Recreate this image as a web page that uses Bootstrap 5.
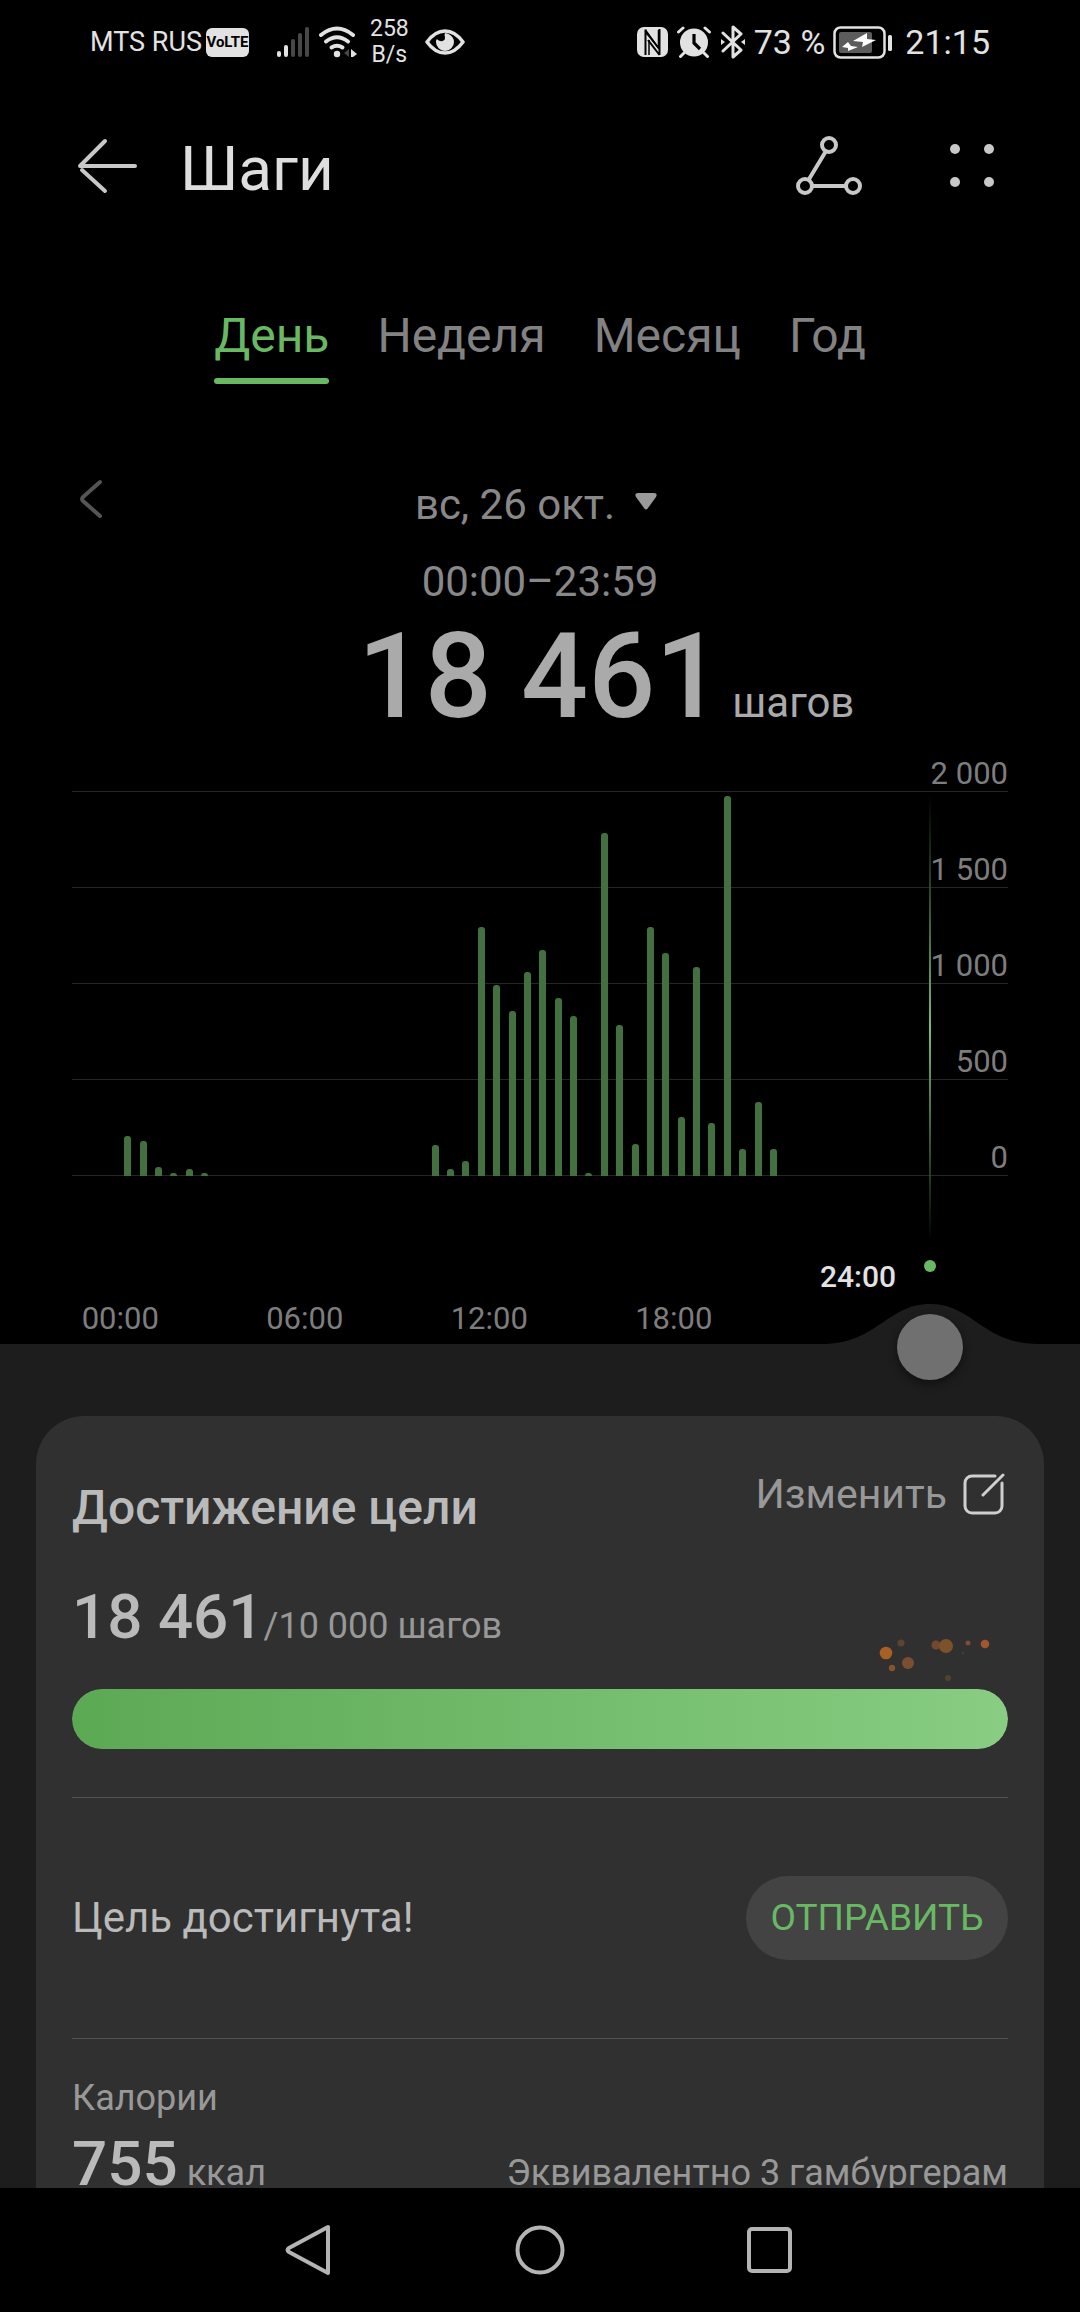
<!DOCTYPE html>
<html lang="ru" data-bs-theme="dark">
<head>
<meta charset="utf-8">
<meta name="viewport" content="width=device-width, initial-scale=1">
<title>Шаги</title>
<link href="https://cdn.jsdelivr.net/npm/bootstrap@5.3.0/dist/css/bootstrap.min.css" rel="stylesheet">
<style>
  :root { --accent: #69b964; --bar: #42703e; --sheet: #1d1d1d; --panel: #303030; }
  body { background: #000; color: #888; font-family: Roboto, "Noto Sans", sans-serif; font-size: 42px; line-height: 56px; }
  svg { display: block; flex: none; }
  .btn-plain { background: none; border: 0; padding: 0; color: inherit; }

  .status-bar { height: 84px; padding: 0 90px; color: #e2e2e2; font-size: 34px; line-height: 40px; }
  .carrier { font-size: 27px; }
  .volte { background: #e2e2e2; color: #000; border-radius: 6px; width: 43px; height: 29px; font-size: 15px; line-height: 29px; font-weight: 700; text-align: center; }
  .net-speed { font-size: 23px; line-height: 26px; text-align: center; margin-left: 13px; }

  .app-header { height: 164px; padding: 0 84px 0 76px; color: #c8c8c8; }
  .app-header h1 { font-size: 62px; line-height: 62px; font-weight: 400; color: #dedede; padding: 6px 0 0 42px; }
  .header-menu { margin-left: 86px; }

  .period-tabs { gap: 48px; margin-top: 60px; font-size: 48px; color: #828282; }
  .period-tabs .nav-link { padding: 0 0 20px; color: inherit; position: relative; }
  .period-tabs .nav-link.active { color: var(--accent); }
  .period-tabs .nav-link.active::after { content: ""; position: absolute; left: 0; right: 0; bottom: 0; height: 6px; border-radius: 3px; background: var(--accent); }

  .date-row { margin-top: 93px; padding: 0 78px; }
  .date-pick { gap: 20px; padding-right: 8px; }
  .time-range { margin-top: 21px; }
  .total { display: grid; grid-template-columns: 1fr auto 1fr; margin-top: 9px; color: #aaa; align-items: baseline; }
  .total-value { grid-column: 2; font-size: 118px; line-height: 116px; font-weight: 500; }
  .total-unit { padding-left: 10px; }

  .chart { margin: 17px 72px 0; font-size: 31px; line-height: 34px; color: #7d7d7d; position: relative; }
  .scale-row { height: 96px; border-bottom: 1px solid #262626; }
  .scale-row.top { height: 40px; }
  .bars { position: absolute; top: 40px; bottom: 0; left: 48px; right: 150px; }
  .bars div { width: 7px; background: var(--bar); border-radius: 3px 3px 0 0; }
  .slot { flex: 1 1 0; }
  .marker-line { position: absolute; top: 43px; height: 447px; right: 77px; width: 2px; background: linear-gradient(transparent, #2c4a2a 22%, #79bd74 52%, #3c6439 75%, transparent); }
  .marker-row { padding: 83px 144px 6px 0; gap: 28px; font-size: 30px; line-height: 36px; font-weight: 500; color: #e2e2e2; }
  .marker-dot { width: 12px; height: 12px; border-radius: 50%; background: var(--accent); margin-top: 1px; }
  .time-axis { padding: 0 314px 7px 28px; font-size: 31px; line-height: 36px; color: #7d7d7d; }

  .sheet { background: var(--sheet); position: relative; min-height: 0; }
  .sheet-bump { position: absolute; right: 42px; top: -40px; }
  .time-slider { position: absolute; top: -30px; left: 87px; right: 117px; width: auto; height: 66px; appearance: none; background: none; z-index: 2; padding: 0; margin: 0; }
  .time-slider::-webkit-slider-runnable-track { background: none; height: 66px; }
  .time-slider::-webkit-slider-thumb { appearance: none; width: 66px; height: 66px; margin: 0; border-radius: 50%; background: #707070; box-shadow: 0 4px 10px rgba(0,0,0,.45); }
  .sheet-clip { overflow: hidden; height: 100%; padding: 72px 36px 0; }

  .goal-card { background: var(--panel); border-radius: 48px 48px 0 0; padding: 56px 36px 36px; }
  .goal-card h2 { font-size: 48px; line-height: 56px; font-weight: 500; color: #bababa; padding-top: 8px; }
  .edit-link { color: #989898; font-size: 41px; line-height: 44px; gap: 16px; padding-right: 3px; }
  .figure-line { line-height: 72px; font-size: 36px; color: #989898; }
  .figure-line strong { font-size: 62px; font-weight: 500; color: #bababa; }
  .goal-figures { margin-top: 45px; }
  .goal-meter { margin-top: 27px; }
  .goal-progress { height: 60px; border-radius: 30px; background: #444; }
  .goal-progress .progress-bar { background: linear-gradient(90deg, #5ca954, #72bb6c 50%, #88cd82); border-radius: 30px; }
  .sparks { position: absolute; right: 14px; top: -53px; }
  .rule { border-top: 1px solid #535353; }
  .reached { height: 240px; color: #bababa; }
  .btn-send { background: #434343; color: var(--accent); border-radius: 42px; height: 84px; width: 262px; font-size: 37px; line-height: 84px; padding: 0; border: 0; }
  .calories-label { font-size: 36px; line-height: 44px; color: #989898; margin-top: 37px; }

  .system-nav { height: 124px; gap: 174px; color: #b4b4b4; }
  .system-nav .btn-plain { width: 56px; }
</style>
</head>
<body>
<div class="vh-100 d-flex flex-column">

  <div class="status-bar d-flex align-items-center justify-content-between flex-shrink-0">
    <div class="d-flex align-items-center">
      <span class="carrier">MTS RUS</span>
      <span class="volte ms-1">VoLTE</span>
      <svg class="ms-4" width="38" height="32" viewBox="0 0 38 32" aria-hidden="true">
        <g fill="#e2e2e2"><rect x="4" y="25" width="4" height="6" rx="2"/><rect x="11" y="19" width="4" height="12" rx="2"/></g>
        <g fill="#484848"><rect x="18" y="13" width="4" height="18" rx="2"/><rect x="25" y="7" width="4" height="24" rx="2"/><rect x="32" y="1" width="4" height="30" rx="2"/></g>
      </svg>
      <svg class="ms-2" width="38" height="32" viewBox="0 0 38 32" aria-hidden="true">
        <g fill="none" stroke="#e2e2e2" stroke-width="4" stroke-linecap="round"><path d="M2 9Q18-4 34 9"/><path d="M7 15.500Q18 7 29 15.500"/><path d="M12.500 21.500Q18 18 23.500 21.500"/></g>
        <circle cx="18" cy="28" r="3.200" fill="#e2e2e2"/><path d="M30 23v8l-5-4z" fill="#484848"/><path d="M32 23l6 5-4 3h-2z" fill="#e2e2e2"/>
      </svg>
      <span class="net-speed">258<br>B/s</span>
      <svg class="ms-3" width="40" height="28" viewBox="0 0 40 28" aria-hidden="true">
        <path d="M2 14Q10 3 20 3T38 14Q30 25 20 25T2 14z" fill="none" stroke="#e2e2e2" stroke-width="3.500" stroke-linejoin="round"/>
        <path d="M20 5c6 1 9 5 9 9a9 9 0 0 1-18 0c0-1 0-2 1-3 2 3 8 3 8-1 0-2-1-3 0-5z" fill="#e2e2e2"/>
      </svg>
    </div>
    <div class="d-flex align-items-center">
      <svg width="31" height="30" viewBox="0 0 31 30" aria-hidden="true">
        <rect width="31" height="30" rx="7" fill="#e2e2e2"/>
        <path d="M8.500 28V2.500M8 4L21.500 21M11 13L22.500 28M22.500 2v26" fill="none" stroke="#000" stroke-width="2"/>
        <path d="M8.500 3L21.500 21V3M12 13v15" fill="none" stroke="#000" stroke-width="1.500"/>
      </svg>
      <svg class="ms-2" width="36" height="32" viewBox="0 0 36 32" aria-hidden="true">
        <circle cx="18" cy="16.500" r="14" fill="#e2e2e2"/>
        <path d="M2.500 6L7 2M33.500 6L29 2M8 27l-3.500 3.500M28 27l3.500 3.500" stroke="#e2e2e2" stroke-width="3" stroke-linecap="round"/>
        <path d="M18 8v9l6 6" fill="none" stroke="#000" stroke-width="3.200"/>
      </svg>
      <svg class="ms-2" width="26" height="34" viewBox="0 0 26 34" aria-hidden="true">
        <path d="M3 8L21 25L13 32V2L21 9L3 26" fill="none" stroke="#e2e2e2" stroke-width="3" stroke-linejoin="round" stroke-linecap="round"/>
        <path d="M1 14l4 3-4 3zM25 14l-4 3 4 3z" fill="#e2e2e2"/>
      </svg>
      <span class="ms-2">73 %</span>
      <svg class="ms-2" width="60" height="33" viewBox="0 0 60 33" aria-hidden="true">
        <rect x="1.500" y="1.500" width="50" height="30" rx="6" fill="none" stroke="#e2e2e2" stroke-width="2.500"/>
        <rect x="6" y="6" width="33" height="21" rx="2" fill="#5c5c5c"/>
        <path d="M34 7l-14 8 10 1-1 5 14-7-9-1zM15 16l-6 5 6 1v3l10-4-7-1z" fill="#fff"/>
        <rect x="55" y="9" width="4" height="16" rx="1.500" fill="#e2e2e2"/>
      </svg>
      <span class="ms-2 ps-1">21:15</span>
    </div>
  </div>

  <header class="app-header d-flex align-items-center flex-shrink-0">
    <button class="btn-plain" type="button" aria-label="Назад">
      <svg width="62" height="56" viewBox="0 0 62 56" fill="none" stroke="currentColor" stroke-width="4" stroke-linecap="round" stroke-linejoin="round"><path d="M59 28H4L29 3M6 32L29 53"/></svg>
    </button>
    <h1 class="mb-0 me-auto">Шаги</h1>
    <button class="btn-plain" type="button" aria-label="Поделиться">
      <svg width="66" height="60" viewBox="0 0 66 60" fill="none" stroke="currentColor" stroke-width="4"><circle cx="33" cy="9" r="7"/><circle cx="9" cy="50" r="7"/><circle cx="57" cy="50" r="7"/><path d="M30 15L12.500 44M16 50h34"/></svg>
    </button>
    <button class="btn-plain header-menu" type="button" aria-label="Меню">
      <svg width="48" height="46" viewBox="0 0 48 46" fill="currentColor"><circle cx="7" cy="6" r="5"/><circle cx="41" cy="6" r="5"/><circle cx="7" cy="39" r="5"/><circle cx="41" cy="39" r="5"/></svg>
    </button>
  </header>

  <nav class="nav period-tabs justify-content-center flex-shrink-0">
    <a class="nav-link active" aria-current="page" href="#">День</a>
    <a class="nav-link" href="#">Неделя</a>
    <a class="nav-link" href="#">Месяц</a>
    <a class="nav-link" href="#">Год</a>
  </nav>

  <div class="date-row d-flex align-items-center flex-shrink-0">
    <div class="flex-fill w-25">
      <button class="btn-plain" type="button" aria-label="Предыдущий день">
        <svg width="26" height="40" viewBox="0 0 26 40" fill="none" stroke="#555" stroke-width="4" stroke-linecap="round" stroke-linejoin="round"><path d="M22 3L5 18q-2 2 0 4L22 37"/></svg>
      </button>
    </div>
    <button class="btn-plain date-pick d-flex align-items-center" type="button">
      вс, 26 окт.
      <svg class="mb-2" width="22" height="17" viewBox="0 0 22 17" fill="#9a9a9a"><path d="M3 0h16q4 0 2 4L13 15q-2 3-4 0L1 4q-2-4 2-4z"/></svg>
    </button>
    <div class="flex-fill w-25"></div>
  </div>
  <div class="time-range text-center flex-shrink-0">00:00–23:59</div>
  <div class="total flex-shrink-0">
    <span class="total-value">18 461</span>
    <span class="total-unit">шагов</span>
  </div>

  <section class="chart flex-shrink-0" aria-label="Шаги по времени">
    <div class="bars d-flex" id="bars"></div>
    <div class="marker-line"></div>
    <div class="scale-row top d-flex align-items-end justify-content-end">2 000</div>
    <div class="scale-row d-flex align-items-end justify-content-end">1 500</div>
    <div class="scale-row d-flex align-items-end justify-content-end">1 000</div>
    <div class="scale-row d-flex align-items-end justify-content-end">500</div>
    <div class="scale-row d-flex align-items-end justify-content-end">0</div>
  </section>
  <div class="marker-row d-flex align-items-start justify-content-end flex-shrink-0">
    <span>24:00</span><span class="marker-dot"></span>
  </div>
  <div class="time-axis d-flex text-center flex-shrink-0">
    <span class="slot">00:00</span><span class="slot">06:00</span><span class="slot">12:00</span><span class="slot">18:00</span>
  </div>

  <main class="sheet flex-grow-1">
    <svg class="sheet-bump" width="216" height="41" viewBox="0 0 216 41"><path d="M0 40C55 40 65 0 108 0S161 40 216 40v1H0z" fill="#1d1d1d"/></svg>
    <input class="time-slider" type="range" min="0" max="24" value="24" aria-label="Время">
    <div class="sheet-clip">
      <section class="goal-card">
        <div class="d-flex justify-content-between align-items-start">
          <h2 class="mb-0">Достижение цели</h2>
          <a class="edit-link d-flex align-items-center text-decoration-none" href="#">Изменить
            <svg width="42" height="42" viewBox="0 0 42 42" fill="none" stroke="#cfcfcf" stroke-width="3" stroke-linecap="round"><path d="M32 3H9a7 7 0 0 0-7 7V33a7 7 0 0 0 7 7h23a7 7 0 0 0 7-7V10M20 22L40 2"/></svg>
          </a>
        </div>
        <div class="figure-line goal-figures"><strong>18 461</strong>/10 000 шагов</div>
        <div class="goal-meter position-relative">
          <svg class="sparks" width="120" height="50" viewBox="0 0 120 50">
            <circle cx="12" cy="17" r="6.300" fill="#a86024"/><circle cx="27" cy="7" r="3.500" fill="#5f4330"/><circle cx="18" cy="32" r="3.200" fill="#8a5228"/><circle cx="34" cy="27" r="6" fill="#7c4d30"/>
            <circle cx="62" cy="9" r="4.500" fill="#74482f"/><circle cx="72" cy="10" r="7" fill="#7b522c"/><circle cx="94" cy="7" r="2.500" fill="#7c4d30"/><circle cx="111" cy="8" r="4.300" fill="#a3552b"/><circle cx="74" cy="42" r="3" fill="#54402e"/><circle cx="89" cy="17" r="1.500" fill="#453a33"/>
          </svg>
          <div class="progress goal-progress" role="progressbar" aria-label="Достижение цели" aria-valuenow="100" aria-valuemin="0" aria-valuemax="100">
            <div class="progress-bar" style="width:100%"></div>
          </div>
        </div>
        <div class="rule mt-5"></div>
        <div class="reached d-flex align-items-center justify-content-between">
          <span>Цель достигнута!</span>
          <button class="btn btn-send" type="button">ОТПРАВИТЬ</button>
        </div>
        <div class="rule"></div>
        <div class="calories-label">Калории</div>
        <div class="figure-line d-flex justify-content-between align-items-baseline mt-2">
          <span><strong>755</strong> ккал</span>
          <span>Эквивалентно 3 гамбургерам</span>
        </div>
      </section>
    </div>
  </main>

  <nav class="system-nav d-flex align-items-center justify-content-center flex-shrink-0" aria-label="Система">
    <button class="btn-plain" type="button" aria-label="Назад"><svg width="56" height="56" viewBox="0 0 56 56" fill="none" stroke="currentColor" stroke-width="4" stroke-linejoin="round"><path d="M46 5v46L7 30q-3-2 0-4z"/></svg></button>
    <button class="btn-plain" type="button" aria-label="Домой"><svg width="56" height="56" viewBox="0 0 56 56" fill="none" stroke="currentColor" stroke-width="4"><circle cx="28" cy="28" r="22.500"/></svg></button>
    <button class="btn-plain" type="button" aria-label="Недавние"><svg width="56" height="56" viewBox="0 0 56 56" fill="none" stroke="currentColor" stroke-width="4"><rect x="7" y="7" width="41" height="42" rx="3"/></svg></button>
  </nav>
</div>

<script src="https://cdn.jsdelivr.net/npm/bootstrap@5.3.0/dist/js/bootstrap.bundle.min.js"></script>
<script>
  // Steps per half hour, from midnight to midnight.
  const steps = [208, 184, 49, 18, 34, 18, 0, 0, 0, 0, 0, 0, 0, 0, 0, 0, 0, 0, 0, 0, 164, 34, 76, 1296,
    997, 857, 1062, 1179, 925, 833, 18, 1787, 788, 169, 1297, 1161, 307, 1091, 274, 1981, 142, 387, 140, 0, 0, 0, 0, 0];
  document.getElementById('bars').innerHTML = steps.map(n =>
    `<span class="slot d-flex align-items-end justify-content-center">${n ? `<div style="height:${n / 20}%"></div>` : ''}</span>`).join('');
</script>
</body>
</html>
